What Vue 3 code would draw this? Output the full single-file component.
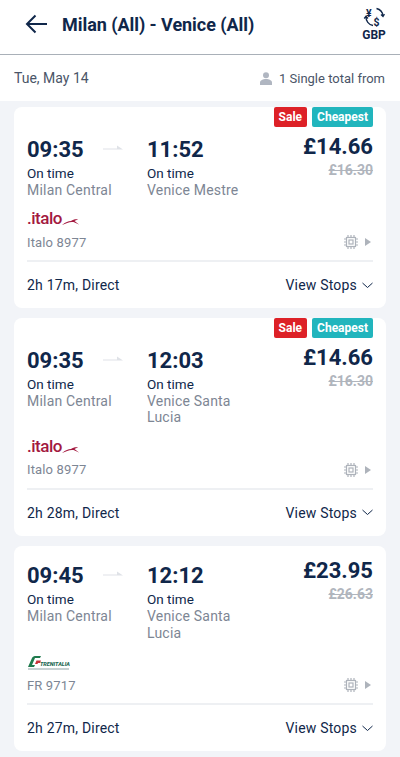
<template>
  <div class="page">
    <header class="header">
      <svg class="back" width="24" height="20" viewBox="0 0 24 20" fill="none" stroke="#10274a" stroke-width="2">
        <path d="M22 10H2M10.500 1.500L2 10l8.500 8.500" />
      </svg>
      <h1 class="title">Milan (All) - Venice (All)</h1>
      <div class="currency">
        <svg width="22" height="22" viewBox="0 0 22 22" fill="none" stroke="#10274a" stroke-width="1.300">
          <path d="M13.500 2.500A8.500 8.500 0 0 1 20 10M18 8.500l2 2 1.500-2.300" />
          <path d="M3 10.500A8.500 8.500 0 0 0 10 19.500M5 12.500L3 10.300 1.200 12.500" />
          <text x="3" y="10.500" class="sym">¥</text>
          <text x="10.500" y="19.500" class="sym">$</text>
        </svg>
        <span>GBP</span>
      </div>
    </header>

    <div class="subbar">
      <span>Tue, May 14</span>
      <span class="pax">
        <svg width="12" height="13" viewBox="0 0 12 13" fill="#b0b6c1">
          <circle cx="6" cy="3.200" r="3" />
          <path d="M0 13v-2.500C0 8.300 3 7 6 7s6 1.300 6 3.500V13z" />
        </svg>
        1 Single total from
      </span>
    </div>

    <main class="list">
      <article v-for="t in trips" :key="t.id" class="card">
        <div class="tags" v-if="t.tagged">
          <span class="tag sale">Sale</span>
          <span class="tag cheapest">Cheapest</span>
        </div>
        <div class="top" :class="{ untagged: !t.tagged }">
          <div class="stop dep">
            <div class="time">{{ t.dep }}</div>
            <div class="status">On time</div>
            <div class="station">Milan Central</div>
          </div>
          <svg class="arrow" width="20" height="8" viewBox="0 0 20 8">
            <path d="M0 5.500h20L14 1.500v3H0z" fill="#dfe2e7" />
          </svg>
          <div class="stop arr">
            <div class="time">{{ t.arr }}</div>
            <div class="status">On time</div>
            <div class="station">{{ t.station }}</div>
          </div>
          <div class="prices">
            <div class="price">{{ t.price }}</div>
            <div class="old">{{ t.oldPrice }}</div>
          </div>
        </div>

        <div class="carrier">
          <div class="logo">
            <svg v-if="t.italo" class="italo-logo" width="54" height="24" viewBox="0 0 54 24">
              <text x="0" y="18" class="italo">.italo</text>
              <path d="M35 19c4-3 6-4 9-4 2-1.500 5-2 7-1.500-1.500.5-3 1-3.500 1.500l4.500 3.500-5.500-2.500c-4-.5-7 1-11.500 3z" fill="#a3193f" />
            </svg>
            <svg v-else class="fs-logo" width="44" height="16" viewBox="0 0 44 16">
              <path d="M1 12L5 3c.5-1 1.500-2 3-2h6l-1 2H8L5 10h3l-1 2z" fill="#1f7a4d" />
              <path d="M8 9l1.500-3.500H14L13 8h-2l-.5 1z" fill="#c8333a" />
              <text x="13" y="11" class="fs-name">TRENITALIA</text>
              <rect x="1" y="13.500" width="41" height="1" fill="#8fa3a6" />
            </svg>
          </div>
          <div class="train-row">
            <span class="train">{{ t.train }}</span>
            <span class="train-icons">
              <svg width="14" height="14" viewBox="0 0 14 14" fill="none" stroke="#aeb3bb" stroke-width="1.200">
                <rect x="2.500" y="2.500" width="9" height="9" />
                <rect x="5" y="5" width="4" height="4" />
                <path d="M4 0v2M7 0v2M10 0v2M4 12v2M7 12v2M10 12v2M0 4h2M0 7h2M0 10h2M12 4h2M12 7h2M12 10h2" />
              </svg>
              <svg width="6" height="8" viewBox="0 0 6 8"><path d="M0 0l6 4-6 4z" fill="#aeb3bb" /></svg>
            </span>
          </div>
        </div>

        <div class="bottom">
          <span class="duration">{{ t.duration }}</span>
          <span class="stops">
            View Stops
            <svg width="11" height="7" viewBox="0 0 11 7" fill="none" stroke="#10274a" stroke-width="1">
              <path d="M.5 1l5 4.500 5-4.500" />
            </svg>
          </span>
        </div>
      </article>
    </main>
  </div>
</template>

<script setup>
const trips = [
  { id: 1, dep: '09:35', arr: '11:52', station: 'Venice Mestre', price: '£14.66', oldPrice: '£16.30', train: 'Italo 8977', italo: true, tagged: true, duration: '2h 17m, Direct' },
  { id: 2, dep: '09:35', arr: '12:03', station: 'Venice Santa Lucia', price: '£14.66', oldPrice: '£16.30', train: 'Italo 8977', italo: true, tagged: true, duration: '2h 28m, Direct' },
  { id: 3, dep: '09:45', arr: '12:12', station: 'Venice Santa Lucia', price: '£23.95', oldPrice: '£26.63', train: 'FR 9717', italo: false, tagged: false, duration: '2h 27m, Direct' }
]
</script>

<style>
body {
  background: #f2f4f8;
}
</style>

<style scoped>
.page {
  width: 400px;
  height: 757px;
  overflow: hidden;
  font-family: Roboto, "Liberation Sans", sans-serif;
  color: #10274a;
  background: #f2f4f8;
}

.header {
  height: 48px;
  display: flex;
  align-items: center;
  padding: 0 13px 6px 25px;
  background: #fff;
  border-bottom: 1px solid #a9b0b8;
}

.back {
  flex: none;
}

.title {
  margin: 0 0 0 13px;
  flex: 1;
  font-size: 18px;
  font-weight: 700;
  letter-spacing: -0.05px;
  white-space: nowrap;
}

.currency {
  width: 26px;
  display: flex;
  flex-direction: column;
  align-items: center;
  font-size: 12px;
  font-weight: 700;
}

.sym {
  font-size: 10.500px;
  font-weight: 700;
  fill: #10274a;
  stroke: none;
}

.subbar {
  height: 46px;
  display: flex;
  align-items: center;
  justify-content: space-between;
  padding: 0 15px 0 14px;
  background: #fff;
  font-size: 14px;
  color: #4a5568;
}

.pax {
  display: flex;
  align-items: center;
  gap: 7px;
  font-size: 13px;
}

.list {
  display: flex;
  flex-direction: column;
  gap: 10px;
  padding: 6px 14px 0;
}

.card {
  position: relative;
  background: #fff;
  border-radius: 8px;
  padding: 0 13px;
}

.tags {
  position: absolute;
  top: 0;
  right: 13px;
  display: flex;
  gap: 5px;
}

.tag {
  height: 20px;
  line-height: 20px;
  padding: 0 5px;
  font-size: 12px;
  font-weight: 700;
  color: #fff;
  border-radius: 2px;
}

.sale {
  background: #dd2127;
}

.cheapest {
  background: #21b5bd;
}

.top {
  display: flex;
  padding-top: 28.500px;
}

.top.untagged {
  padding-top: 16.500px;
}

.stop {
  flex: none;
}

.dep {
  width: 76px;
  white-space: nowrap;
}

.arr {
  width: 112px;
}

.arrow {
  flex: none;
  margin: 8px 24px 0 0;
}

.time {
  font-size: 22px;
  font-weight: 700;
  line-height: 28px;
}

.status {
  font-size: 13.500px;
  line-height: 18px;
}

.station {
  font-size: 14px;
  line-height: 16.500px;
  letter-spacing: 0.2px;
  color: #7d8694;
}

.prices {
  flex: 1;
  text-align: right;
  margin-top: -3px;
}

.untagged .prices {
  margin-top: -5px;
}

.price {
  font-size: 22px;
  font-weight: 700;
  line-height: 28px;
}

.old {
  font-size: 14px;
  font-weight: 700;
  line-height: 18px;
  color: #b0b5bd;
  text-decoration: line-through;
}

.carrier {
  padding-top: 12px;
}

.logo {
  height: 18px;
  display: flex;
}

.italo-logo {
  margin-top: -4px;
}

.fs-logo {
  margin-top: 2px;
}

.italo {
  font-size: 17px;
  font-weight: 500;
  letter-spacing: -0.5px;
  fill: #a3193f;
}

.fs-name {
  font-size: 5.500px;
  font-weight: 900;
  font-style: italic;
  fill: #1f6a55;
}

.train-row {
  display: flex;
  align-items: center;
  justify-content: space-between;
  margin-top: 4px;
  height: 20px;
}

.train {
  font-size: 13px;
  letter-spacing: 0.15px;
  color: #7d8694;
}

.train-icons {
  display: flex;
  align-items: center;
  gap: 7px;
  padding-right: 2px;
}

.bottom {
  margin-top: 8px;
  height: 46px;
  display: flex;
  align-items: center;
  justify-content: space-between;
  border-top: 2px solid #eef0f3;
  font-size: 14px;
  letter-spacing: 0.2px;
}

.stops {
  display: flex;
  align-items: center;
  gap: 5px;
}
</style>
